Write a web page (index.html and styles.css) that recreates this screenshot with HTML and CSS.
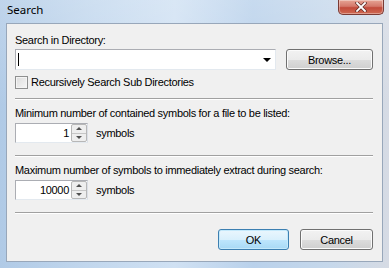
FILE: index.html
```html
<!DOCTYPE html>
<html>
<head>
<meta charset="utf-8">
<link rel="stylesheet" href="styles.css">
</head>
<body>
<div class="window">
  <div class="titlebar">
    <span class="title">Search</span>
    <button class="close" aria-label="Close">
      <svg width="12" height="10" viewBox="0 0 12 10"><path d="M2 1 L10 9 M10 1 L2 9" stroke="#5a2a25" stroke-width="3.2" stroke-linecap="square"/><path d="M2 1 L10 9 M10 1 L2 9" stroke="#ffffff" stroke-width="1.8" stroke-linecap="square"/></svg>
    </button>
  </div>
  <div class="client">
    <div class="label">Search in Directory:</div>
    <div class="dir-row">
      <div class="combo">
        <span class="caret"></span>
        <span class="drop-arrow"></span>
      </div>
      <button class="btn browse">Browse...</button>
    </div>
    <div class="check-row">
      <span class="checkbox"></span>
      <span class="check-label">Recursively Search Sub Directories</span>
    </div>
    <div class="sep"></div>
    <div class="label label-gap">Minimum number of contained symbols for a file to be listed:</div>
    <div class="spin-row">
      <div class="spin">
        <span class="val">1</span>
        <span class="spin-btns"><span class="up"></span><span class="down"></span></span>
      </div>
      <span class="unit">symbols</span>
    </div>
    <div class="sep sep-wide"></div>
    <div class="label label-gap">Maximum number of symbols to immediately extract during search:</div>
    <div class="spin-row">
      <div class="spin">
        <span class="val">10000</span>
        <span class="spin-btns"><span class="up"></span><span class="down"></span></span>
      </div>
      <span class="unit">symbols</span>
    </div>
    <div class="sep sep-wide"></div>
    <div class="buttons">
      <button class="btn ok">OK</button>
      <button class="btn cancel">Cancel</button>
    </div>
  </div>
</div>
</body>
</html>
```

FILE: styles.css
```css
html, body {
  margin: 0;
  padding: 0;
}

.window {
  width: 389px;
  height: 268px;
  display: flex;
  flex-direction: column;
  font-family: "Liberation Sans", Arial, sans-serif;
  font-size: 11px;
  letter-spacing: -0.3px;
  color: #000;
  background:
    linear-gradient(to bottom, rgba(255,255,255,0.2), rgba(255,255,255,0) 40%),
    linear-gradient(to right, #b0cae6 0%, #c3d8ee 25%, #d0e1f3 45%, #b9d1eb 65%, #c6d8eb 85%, #d6dbe4 100%);
}

.titlebar {
  height: 23px;
  display: flex;
  align-items: flex-start;
  flex-shrink: 0;
}

.title {
  font-family: "Noto Sans", "Open Sans", sans-serif;
  font-size: 11.5px;
  letter-spacing: 0;
  line-height: 16px;
  margin: 2px 0 0 7px;
  color: #000;
}

.close {
  margin-left: auto;
  margin-right: 5px;
  width: 46px;
  height: 15px;
  padding: 0;
  border: 1px solid #7a3a33;
  border-top: none;
  border-radius: 0 0 5px 5px;
  background: linear-gradient(to bottom, #e6a494 0%, #d4786a 45%, #c24a3a 55%, #cf6a52 100%);
  box-shadow: inset 0 0 0 1px rgba(255,255,255,0.35);
  display: flex;
  align-items: center;
  justify-content: center;
}

.client {
  margin: 0 6px 0 6px;
  height: 239px;
  box-sizing: border-box;
  border: 1px solid #98a7ba;
  background: #f0f0f0;
  padding: 10px 9px 0 8px;
  display: flex;
  flex-direction: column;
}

.label {
  line-height: 13px;
  height: 13px;
  white-space: nowrap;
}

.label-gap {
  margin-top: 7px;
}

.dir-row {
  display: flex;
  gap: 10px;
  margin-top: 2px;
  height: 21px;
}

.combo {
  flex: 1;
  box-sizing: border-box;
  border: 1px solid #abadb3;
  border-right-color: #e3e9ef;
  border-bottom-color: #e3e9ef;
  background: #fff;
  display: flex;
  align-items: center;
  padding-left: 2px;
}

.caret {
  width: 1px;
  height: 13px;
  background: #000;
}

.drop-arrow {
  margin-left: auto;
  margin-right: 4px;
  width: 0;
  height: 0;
  border-left: 4px solid transparent;
  border-right: 4px solid transparent;
  border-top: 4px solid #000;
}

.btn {
  box-sizing: border-box;
  height: 21px;
  padding: 0;
  font-family: "Liberation Sans", Arial, sans-serif;
  font-size: 11px;
  letter-spacing: -0.3px;
  color: #000;
  border: 1px solid #707070;
  border-radius: 3px;
  background: linear-gradient(to bottom, #f2f2f2 0%, #ebebeb 50%, #dddddd 51%, #cfcfcf 100%);
  box-shadow: inset 0 0 0 1px #fbfbfb;
}

.browse {
  width: 87px;
}

.check-row {
  display: flex;
  align-items: center;
  margin-top: 6px;
  height: 13px;
}

.checkbox {
  box-sizing: border-box;
  width: 13px;
  height: 13px;
  border: 1px solid #8e8f8f;
  background: linear-gradient(135deg, #dcdcdc 0%, #f6f6f6 100%);
  box-shadow: inset 0 0 0 1px #f4f4f4;
}

.check-label {
  margin-left: 3px;
  line-height: 13px;
}

.sep {
  margin-top: 9px;
  border-top: 1px solid #a0a0a0;
  border-bottom: 1px solid #ffffff;
}

.sep-wide {
  margin-top: 12px;
}

.spin-row {
  display: flex;
  align-items: center;
  margin-top: 3px;
  height: 20px;
}

.spin {
  box-sizing: border-box;
  width: 73px;
  height: 20px;
  border: 1px solid #abadb3;
  border-right-color: #dbdfe6;
  border-bottom-color: #e3e9ef;
  background: #fff;
  display: flex;
  align-items: center;
}

.val {
  flex: 1;
  text-align: right;
  padding-right: 2px;
  line-height: 13px;
}

.spin-btns {
  box-sizing: border-box;
  width: 16px;
  height: 18px;
  border: 1px solid #b7b7b7;
  border-radius: 2px;
  background: #eeeeee;
  display: flex;
  flex-direction: column;
}

.spin-btns .up,
.spin-btns .down {
  flex: 1;
  display: flex;
  align-items: center;
  justify-content: center;
}

.spin-btns .up {
  border-bottom: 1px solid #c6c6c6;
}

.spin-btns .up::after {
  content: "";
  border-left: 3px solid transparent;
  border-right: 3px solid transparent;
  border-bottom: 3px solid #505050;
}

.spin-btns .down::after {
  content: "";
  border-left: 3px solid transparent;
  border-right: 3px solid transparent;
  border-top: 3px solid #505050;
}

.unit {
  margin-left: 8px;
}

.buttons {
  display: flex;
  justify-content: flex-end;
  gap: 11px;
  margin-top: 15px;
}

.ok {
  width: 71px;
  border-color: #3c7fb1;
  background: linear-gradient(to bottom, #eaf6fd 0%, #d9f0fc 50%, #bee6fd 51%, #a7d9f5 100%);
  box-shadow: inset 0 0 0 1px #c4e9fb;
}

.cancel {
  width: 73px;
}
```
